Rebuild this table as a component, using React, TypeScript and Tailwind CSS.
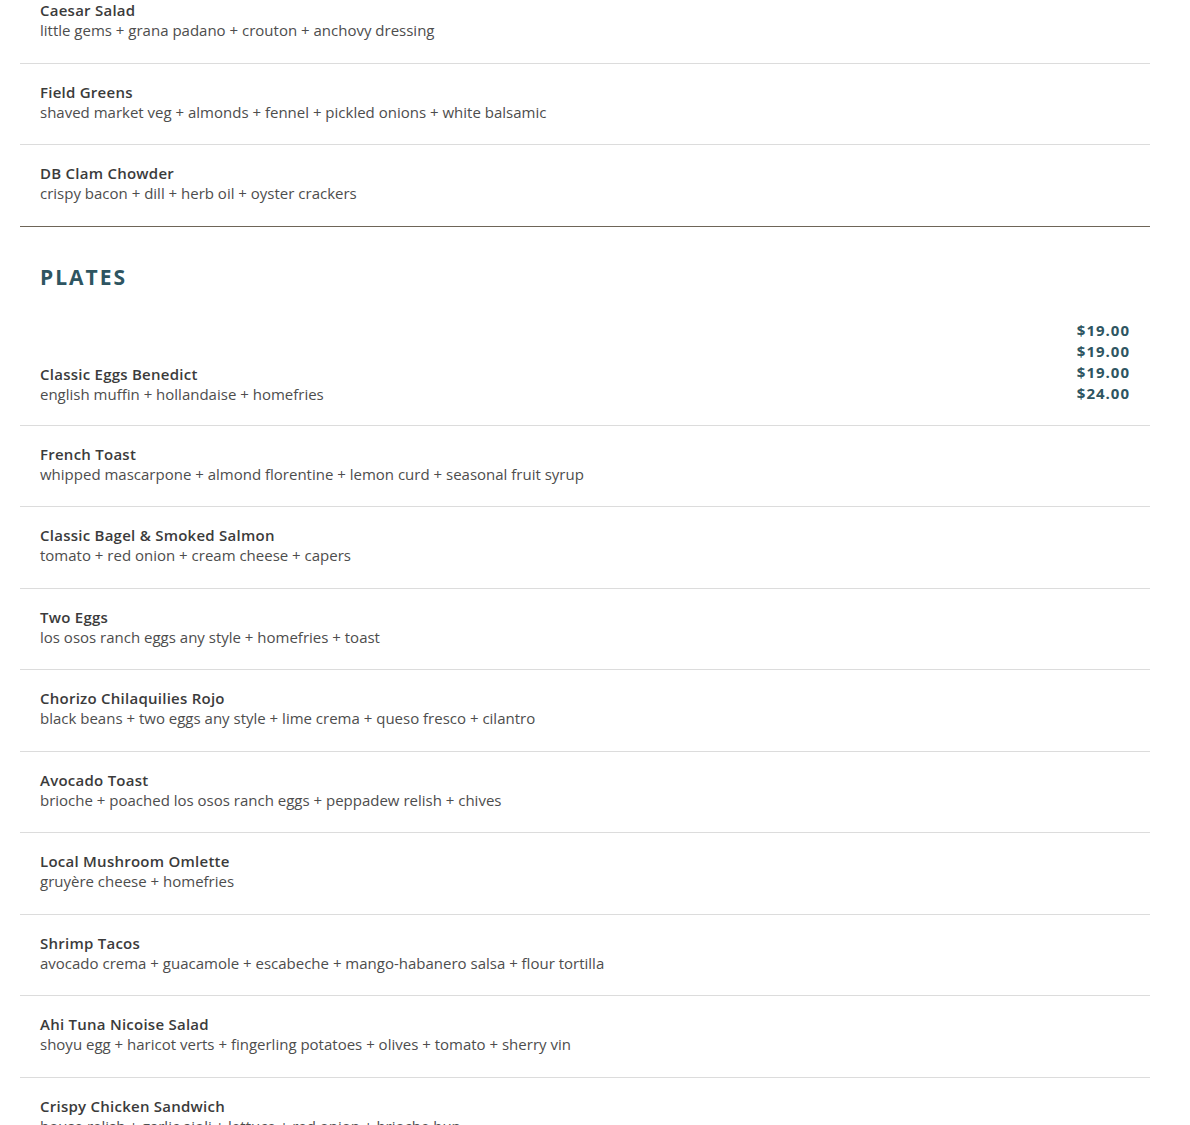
import React from "react";

type Item = { name: string; desc: string };

const starters: Item[] = [
  { name: "Caesar Salad", desc: "little gems + grana padano + crouton + anchovy dressing" },
  { name: "Field Greens", desc: "shaved market veg + almonds + fennel + pickled onions + white balsamic" },
  { name: "DB Clam Chowder", desc: "crispy bacon + dill + herb oil + oyster crackers" },
];

const plates: Item[] = [
  { name: "French Toast", desc: "whipped mascarpone + almond florentine + lemon curd + seasonal fruit syrup" },
  { name: "Classic Bagel & Smoked Salmon", desc: "tomato + red onion + cream cheese + capers" },
  { name: "Two Eggs", desc: "los osos ranch eggs any style + homefries + toast" },
  { name: "Chorizo Chilaquilies Rojo", desc: "black beans + two eggs any style + lime crema + queso fresco + cilantro" },
  { name: "Avocado Toast", desc: "brioche + poached los osos ranch eggs + peppadew relish + chives" },
  { name: "Local Mushroom Omlette", desc: "gruyère cheese + homefries" },
  { name: "Shrimp Tacos", desc: "avocado crema + guacamole + escabeche + mango-habanero salsa + flour tortilla" },
  { name: "Ahi Tuna Nicoise Salad", desc: "shoyu egg + haricot verts + fingerling potatoes + olives + tomato + sherry vin" },
  { name: "Crispy Chicken Sandwich", desc: "house relish + garlic aioli + lettuce + red onion + brioche bun" },
];

const font = { fontFamily: "'Open Sans', 'Liberation Sans', sans-serif" };

function Row({ item, last }: { item: Item; last?: boolean }) {
  return (
    <div className={`px-5 pt-[18px] pb-[22.5px] ${last ? "" : "border-b border-[#dcdcdc]"}`}>
      <div className="text-[15px] leading-[20px] font-semibold tracking-[0.25px] text-[#3b3b3b]">{item.name}</div>
      <div className="text-[15px] leading-[20px] text-[#4d4d4d]">{item.desc}</div>
    </div>
  );
}

export default function App() {
  return (
    <div className="w-[1190px] h-[1125px] overflow-hidden bg-white" style={font}>
      <div className="ml-5 w-[1130px] -mt-[18px]">
        <div className="border-b border-[#6e6558]">
          {starters.map((it, i) => (
            <Row key={it.name} item={it} last={i === starters.length - 1} />
          ))}
        </div>
        <div className="px-5 pt-[38px] pb-[11px]">
          <h2 className="text-[21px] leading-[24px] font-bold tracking-[2px] text-[#2e5561]">PLATES</h2>
        </div>
        <div className="px-5 pt-[20px] pb-[21px] border-b border-[#dcdcdc] flex items-end justify-between">
          <div>
            <div className="text-[15px] leading-[20px] font-semibold tracking-[0.25px] text-[#3b3b3b]">Classic Eggs Benedict</div>
            <div className="text-[15px] leading-[20px] text-[#4d4d4d]">english muffin + hollandaise + homefries</div>
          </div>
          <div className="flex flex-col items-end text-[15px] leading-[21px] font-bold tracking-[1px] text-[#2e5561]">
            <span>$19.00</span>
            <span>$19.00</span>
            <span>$19.00</span>
            <span>$24.00</span>
          </div>
        </div>
        {plates.map((it) => (
          <Row key={it.name} item={it} />
        ))}
      </div>
    </div>
  );
}
